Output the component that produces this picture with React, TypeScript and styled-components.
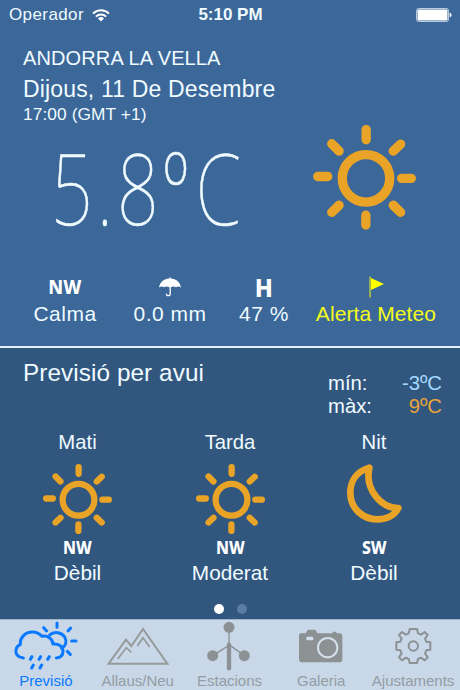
import styled, { createGlobalStyle } from "styled-components"

const App = () => {
  return (
    <Screen>
      <GlobalStyle />
      <CurrentPanel>
        <StatusBar>
          <Carrier>
            Operador
            <WifiIcon />
          </Carrier>
          <Clock>5:10 PM</Clock>
          <BatteryIcon />
        </StatusBar>
        <Place>
          <City>ANDORRA LA VELLA</City>
          <DateText>Dijous, 11 De Desembre</DateText>
          <TimeText>17:00 (GMT +1)</TimeText>
        </Place>
        <Hero>
          <Temperature>
            <span>5</span>
            <span>.</span>
            <span>8</span>
            <span>º</span>
            <TemperatureUnit>C</TemperatureUnit>
          </Temperature>
          <SunIcon width={103} />
        </Hero>
        <Metrics>
          <Metric>
            <MetricIcon>
              <Wind $size={19.5}>NW</Wind>
            </MetricIcon>
            Calma
          </Metric>
          <Metric>
            <MetricIcon>
              <UmbrellaIcon />
            </MetricIcon>
            0.0 mm
          </Metric>
          <Metric>
            <MetricIcon>
              <Wind $size={25.5}>H</Wind>
            </MetricIcon>
            47 %
          </Metric>
          <Metric $alert>
            <MetricIcon>
              <FlagIcon />
            </MetricIcon>
            Alerta Meteo
          </Metric>
        </Metrics>
      </CurrentPanel>

      <ForecastPanel>
        <ForecastHeader>
          <ForecastTitle>Previsió per avui</ForecastTitle>
          <Range>
            <span>mín:</span>
            <RangeValue $color="#a5d8ff">-3ºC</RangeValue>
            <span>màx:</span>
            <RangeValue $color="#e8a33a">9ºC</RangeValue>
          </Range>
        </ForecastHeader>
        <Periods>
          {periods.map((period) => (
            <Period key={period.name}>
              <PeriodName>{period.name}</PeriodName>
              <PeriodIcon>
                {period.night ? <MoonIcon /> : <SunIcon width={69} />}
              </PeriodIcon>
              <Wind $size={17}>{period.wind}</Wind>
              <Strength>{period.strength}</Strength>
            </Period>
          ))}
        </Periods>
        <Dots>
          <Dot $active />
          <Dot />
        </Dots>
      </ForecastPanel>

      <TabBar>
        <Tab $active>
          <RainIcon />
          <TabLabel>Previsió</TabLabel>
        </Tab>
        <Tab>
          <MountainIcon />
          <TabLabel>Allaus/Neu</TabLabel>
        </Tab>
        <Tab>
          <StationIcon />
          <TabLabel>Estacions</TabLabel>
        </Tab>
        <Tab>
          <CameraIcon />
          <TabLabel>Galeria</TabLabel>
        </Tab>
        <Tab>
          <GearIcon />
          <TabLabel>Ajustaments</TabLabel>
        </Tab>
      </TabBar>
    </Screen>
  )
}

export default App

const periods = [
  { name: "Mati", wind: "NW", strength: "Dèbil", night: false },
  { name: "Tarda", wind: "NW", strength: "Moderat", night: false },
  { name: "Nit", wind: "SW", strength: "Dèbil", night: true },
]

// icons
const WifiIcon = () => (
  <svg width="18" height="13" viewBox="0 0 18 13" fill="none" stroke="#fff" strokeWidth="2">
    <path d="M1 4.6a11.4 11.4 0 0 1 16 0" />
    <path d="M3.9 7.6a7.3 7.3 0 0 1 10.2 0" />
    <path d="M9 12.6 6 9.5a4.3 4.3 0 0 1 6 0z" fill="#fff" stroke="none" />
  </svg>
)

const BatteryIcon = () => (
  <svg width="36" height="14" viewBox="0 0 36 14">
    <rect x="0.5" y="0.5" width="32" height="13" rx="2" fill="none" stroke="#b9cbe0" />
    <rect x="1.5" y="1.5" width="30" height="11" rx="0.8" fill="#fff" />
    <path d="M33.6 4.8q2 .5 2 2.2t-2 2.2z" fill="#fff" />
  </svg>
)

const SunIcon = ({ width }: { width: number }) => (
  <svg
    width={width}
    height={(width * 314) / 308}
    viewBox="39 46 308 314"
    fill="none"
    stroke="#e9a427"
    strokeWidth="28"
    strokeLinecap="round"
  >
    <circle cx="197.5" cy="205.5" r="71" />
    <path d="M198 60v30M197 316v29M53 200h30M304 205.5h29" />
    <path d="M95 102l22 22M301 103l-22 21M95 307l22-21M279 286l22 21" />
  </svg>
)

const MoonIcon = () => (
  <svg width="55" height="59" viewBox="138 28 165 177" fill="none">
    <path
      d="M205 39C166 51 148 80 148 114C148 160 184 194 229 194C258 194 281 181 292 160C238 161 191 102 205 39Z"
      stroke="#e9a427"
      strokeWidth="20"
      strokeLinejoin="round"
    />
  </svg>
)

const UmbrellaIcon = () => (
  <svg width="22" height="20" viewBox="0 0 22 20">
    <path
      d="M0 10.5C1 5 5 2 10.3 1.6V.5h1.4v1.1C17 2 21 5 22 10.5C20.5 9.3 18.5 9.3 17 10.2C15.3 9.1 13.3 9.1 11.7 10.2H10.3C8.7 9.1 6.7 9.1 5 10.2C3.5 9.3 1.5 9.3 0 10.5Z"
      fill="#fff"
    />
    <path d="M11.2 9v7.7q0 2-1.9 2t-1.9-1.9" fill="none" stroke="#fff" strokeWidth="1.3" />
  </svg>
)

const FlagIcon = () => (
  <svg width="15" height="22" viewBox="0 0 15 22">
    <path d="M2 2l13 6-13 6z" fill="#ffff00" />
    <path d="M1 .5v21" stroke="#c5cf3c" strokeWidth="1.4" />
  </svg>
)

const RainIcon = () => (
  <svg
    width="64"
    height="52"
    viewBox="43 78 192 156"
    fill="none"
    stroke="#0a78ff"
    strokeWidth="9"
    strokeLinecap="round"
    strokeLinejoin="round"
  >
    <path d="M71 192C54 190 47 180 49 168C50 160 56 154 62 152C60 130 77 114 98 114C110 114 119 118 127 127C142 123 158 132 160 150C176 148 190 157 190 172C190 184 182 191 170 192" />
    <path d="M150 123C164 111 186 115 195 129C203 143 198 157 186 163" />
    <path d="M172 87v13M213 102l-8 9M132 101l9 10M216 141h13M203 172l9 9" />
    <path d="M97 188l-5 8M123 188l-5 8M149 188l-5 8M101 213l-5 9M126 213l-5 9" />
  </svg>
)

const MountainIcon = () => (
  <svg width="62" height="38" viewBox="321 98 186 114" fill="none" stroke="#969a9b" strokeWidth="6">
    <path d="M326 208L378 136L394 155L429 104L502 208Z" />
    <path d="M353 194L379 160L394 174M412 155L429 130L449 158" strokeWidth="5" />
  </svg>
)

const StationIcon = () => (
  <svg width="44" height="50" viewBox="83 79 132 150" fill="#8c9194" stroke="#8c9194">
    <path d="M149 98v54L100 183M149 150l46 33" fill="none" strokeWidth="4" />
    <path d="M149 150v71" strokeWidth="13" strokeLinecap="round" />
    <circle cx="149" cy="98" r="16.5" stroke="none" />
    <circle cx="100" cy="183" r="16.5" stroke="none" />
    <circle cx="195" cy="183" r="16.5" stroke="none" />
  </svg>
)

const CameraIcon = () => (
  <svg width="44" height="34" viewBox="359 105 132 102" fill="#8c9194">
    <path d="M366 118h13l4-8q2-3 5-3h17q4 0 5 3l4 8h44l4-5h7l4 5h7q9 0 9 9v69q0 9-9 9H368q-9 0-9-9v-69q0-9 7-9z" />
    <rect x="381" y="128" width="21" height="11" rx="3" fill="#d3e0ec" />
    <circle cx="445" cy="161" r="29" stroke="#d3e0ec" strokeWidth="6" />
  </svg>
)

const GearIcon = () => (
  <svg
    width="38"
    height="38"
    viewBox="-58 -57 114 114"
    fill="none"
    stroke="#8c9194"
    strokeWidth="6"
    strokeLinejoin="round"
  >
    <path d="M-11 -51H11L14 -38L23 -34L34 -42L43 -33L35 -22L39 -13L51 -11V11L39 13L35 22L43 34L34 43L23 35L14 39L11 51H-11L-14 39L-23 35L-34 43L-43 34L-35 22L-39 13L-51 11V-11L-39 -13L-35 -22L-43 -33L-34 -42L-23 -34L-14 -38Z" />
    <circle r="14" />
  </svg>
)

const GlobalStyle = createGlobalStyle`
  body {
    margin: 0;
  }
  * {
    box-sizing: border-box;
  }
  svg {
    display: block;
    flex-shrink: 0;
  }
`

const Screen = styled.div`
  width: 460px;
  height: 690px;
  display: flex;
  flex-direction: column;
  overflow: hidden;
  font-family: "Liberation Sans", Arial, sans-serif;
  color: #f0fbff;
  white-space: nowrap;
`

const CurrentPanel = styled.section`
  height: 348px;
  background: #3b6799;
  border-bottom: 2px solid #e6eff7;
`

const StatusBar = styled.header`
  height: 30px;
  padding: 0 8px 0 9px;
  display: grid;
  grid-template-columns: 1fr auto 1fr;
  align-items: center;
  font-size: 17px;
  line-height: 30px;

  & > svg {
    justify-self: end;
  }
`

const Carrier = styled.div`
  display: flex;
  align-items: center;
  gap: 8px;
  letter-spacing: 0.4px;
`

const Clock = styled.div`
  font-weight: bold;
`

const Place = styled.div`
  padding: 16px 23px 0;
`

const City = styled.div`
  font-size: 20px;
  line-height: 24px;
  letter-spacing: 0.12px;
`

const DateText = styled.div`
  margin-top: 4px;
  font-size: 23px;
  line-height: 30px;
  letter-spacing: 0.16px;
`

const TimeText = styled.div`
  font-size: 17.3px;
  line-height: 20px;
  letter-spacing: 0.1px;
`

const Hero = styled.div`
  height: 150px;
  padding: 1px 44px 0 51px;
  display: flex;
  justify-content: space-between;
  align-items: flex-start;
`

const Temperature = styled.div`
  width: 240px;
  display: flex;
  gap: 5.5px;
  font-family: "Noto Sans", "Open Sans", sans-serif;
  font-weight: 100;
  font-size: 99px;
  line-height: 123px;
  -webkit-text-stroke: 0.6px #f0fbff;
  transform: scaleX(0.74);
  transform-origin: left;
`

const TemperatureUnit = styled.span`
  margin-left: 4px;
`

const Metrics = styled.div`
  padding: 0 14px 0 12px;
  display: grid;
  grid-template-columns: 106px 104px 84px 140px;
`

const Metric = styled.div<{ $alert?: boolean }>`
  display: flex;
  flex-direction: column;
  align-items: center;
  font-size: 21px;
  line-height: 28px;
  letter-spacing: ${({ $alert }) => ($alert ? "0.1px" : "0.5px")};
  color: ${({ $alert }) => ($alert ? "#f4fb1c" : "inherit")};
`

const MetricIcon = styled.div`
  height: 26px;
  display: flex;
  align-items: center;
`

const Wind = styled.div<{ $size: number }>`
  font-family: "Noto Sans", "Open Sans", sans-serif;
  font-weight: 800;
  font-size: ${({ $size }) => $size}px;
  line-height: 18px;
  letter-spacing: 0;
  color: #fff;
  transform: scaleX(0.93);
`

const ForecastPanel = styled.section`
  height: 271px;
  background: #31577f;
`

const ForecastHeader = styled.div`
  height: 82px;
  padding: 9px 18px 0 23px;
  display: flex;
  justify-content: space-between;
`

const ForecastTitle = styled.div`
  font-size: 24.3px;
  line-height: 32px;
  letter-spacing: 0.08px;
`

const Range = styled.div`
  width: 114px;
  padding-top: 15px;
  display: grid;
  grid-template-columns: 1fr auto;
  align-content: start;
  font-size: 20.3px;
  line-height: 23px;
`

const RangeValue = styled.span<{ $color: string }>`
  color: ${({ $color }) => $color};
  text-align: right;
`

const Periods = styled.div`
  padding-left: 1px;
  display: grid;
  grid-template-columns: 153px 152px 136px;
`

const Period = styled.div`
  display: flex;
  flex-direction: column;
  align-items: center;
`

const PeriodName = styled.div`
  font-size: 20.3px;
  line-height: 24px;
`

const PeriodIcon = styled.div`
  height: 85px;
  padding-top: 10px;
`

const Strength = styled.div`
  margin-top: 4px;
  font-size: 20.8px;
  line-height: 24px;
`

const Dots = styled.div`
  margin-top: 19px;
  display: flex;
  justify-content: center;
  gap: 13px;
`

const Dot = styled.div<{ $active?: boolean }>`
  width: 10px;
  height: 10px;
  border-radius: 50%;
  background: ${({ $active }) => ($active ? "#fff" : "#5a7da3")};
`

const TabBar = styled.nav`
  height: 71px;
  padding: 0 1px 0 0;
  display: grid;
  grid-template-columns: repeat(5, 1fr);
  background: #c8d8e8;
  border-top: 1px solid #9fb4ca;
`

const Tab = styled.div<{ $active?: boolean }>`
  display: flex;
  flex-direction: column;
  align-items: center;
  color: ${({ $active }) => ($active ? "#0a78ff" : "#949ca4")};

  svg {
    margin: auto;
  }
`

const TabLabel = styled.div`
  height: 19px;
  font-size: 15px;
  line-height: 17px;
`
